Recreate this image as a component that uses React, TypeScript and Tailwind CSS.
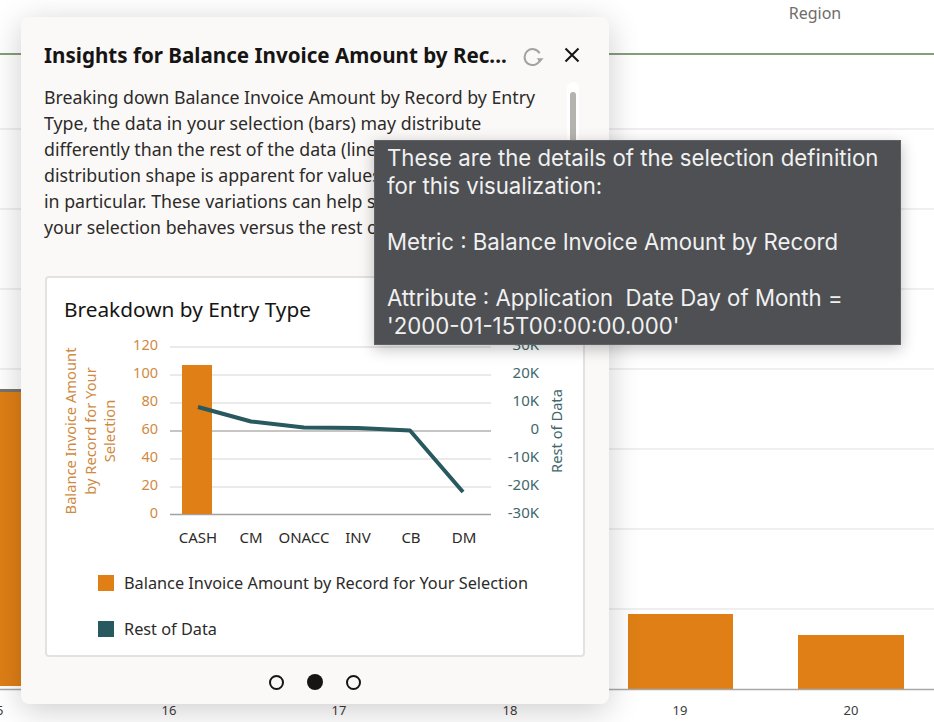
import * as React from "react";

const bodyLines = [
  "Breaking down Balance Invoice Amount by Record by Entry",
  "Type, the data in your selection (bars) may distribute",
  "differently than the rest of the data (line). A different",
  "distribution shape is apparent for values CASH and DM",
  "in particular. These variations can help show how",
  "your selection behaves versus the rest of the data.",
];

const leftTicks = [
  { label: "120", y: 345 },
  { label: "100", y: 373 },
  { label: "80", y: 401 },
  { label: "60", y: 429 },
  { label: "40", y: 457 },
  { label: "20", y: 485 },
  { label: "0", y: 513 },
];

const rightTicks = [
  { label: "30K", y: 345 },
  { label: "20K", y: 373 },
  { label: "10K", y: 401 },
  { label: "0", y: 429 },
  { label: "-10K", y: 457 },
  { label: "-20K", y: 485 },
  { label: "-30K", y: 513 },
];

const categories = [
  { label: "CASH", x: 197 },
  { label: "CM", x: 250 },
  { label: "ONACC", x: 303 },
  { label: "INV", x: 357 },
  { label: "CB", x: 410 },
  { label: "DM", x: 463 },
];

function BackgroundChart() {
  return (
    <svg width="934" height="722" className="block" style={{ fontFamily: "'Noto Sans', sans-serif" }}>
      <text x="815" y="19" textAnchor="middle" fontSize="16" fill="#6f6d6a">
        Region
      </text>
      <line x1="0" x2="934" y1="54" y2="54" stroke="#5f7d4f" strokeWidth="1.5" />
      {[129, 209, 289, 369, 449, 529, 609].map((y) => (
        <line key={y} x1="0" x2="934" y1={y} y2={y} stroke="#ebeaea" strokeWidth="1.5" />
      ))}
      <rect x="-10" y="392" width="40" height="294" fill="#df7f16" />
      <rect x="-10" y="389" width="40" height="3" fill="#77736e" />
      <rect x="628" y="614" width="105" height="75" fill="#df7f16" />
      <rect x="798" y="635" width="106" height="54" fill="#df7f16" />
      <line x1="0" x2="934" y1="689.5" y2="689.5" stroke="#a9a8a6" strokeWidth="1.5" />
      {[
        { t: "15", x: -4 },
        { t: "16", x: 169 },
        { t: "17", x: 339 },
        { t: "18", x: 510 },
        { t: "19", x: 680 },
        { t: "20", x: 851 },
      ].map((l) => (
        <text key={l.t} x={l.x} y="715" textAnchor="middle" fontSize="13" fill="#3d3b39">
          {l.t}
        </text>
      ))}
    </svg>
  );
}

function BreakdownChart() {
  return (
    <svg
      width="538"
      height="246"
      viewBox="46 330 538 246"
      className="block"
      style={{ fontFamily: "'Noto Sans', sans-serif" }}
    >
      {[347, 375, 403, 459, 487].map((y) => (
        <line key={y} x1="169" x2="490" y1={y} y2={y} stroke="#e4e3e1" strokeWidth="1.5" />
      ))}
      <line x1="169" x2="490" y1="431" y2="431" stroke="#b3b2b0" strokeWidth="1.5" />
      <line x1="169" x2="490" y1="514.5" y2="514.5" stroke="#a3a2a0" strokeWidth="1.5" />
      <rect x="181" y="365" width="30" height="149" fill="#df7f16" />
      <polyline
        points="197,407 250,421.5 303,427.5 357,428 409,430.5 462,492"
        fill="none"
        stroke="#27595e"
        strokeWidth="4"
        strokeLinejoin="round"
      />
      {leftTicks.map((t) => (
        <text key={t.label} x="157" y={t.y + 5} textAnchor="end" fontSize="14.5" fill="#cf8a3f">
          {t.label}
        </text>
      ))}
      {rightTicks.map((t) => (
        <text key={t.label} x="538" y={t.y + 5} textAnchor="end" fontSize="15" fill="#41686c">
          {t.label}
        </text>
      ))}
      {categories.map((c) => (
        <text key={c.label} x={c.x} y="543" textAnchor="middle" fontSize="15" fill="#2b2a28">
          {c.label}
        </text>
      ))}
      <g fontSize="14.7" fill="#cf8a3f" textAnchor="middle">
        <text transform="translate(75 431) rotate(-90)">Balance Invoice Amount</text>
        <text transform="translate(95 431) rotate(-90)">by Record for Your</text>
        <text transform="translate(114 431) rotate(-90)">Selection</text>
      </g>
      <text fontSize="14.7" fill="#41686c" textAnchor="middle" transform="translate(561 431) rotate(-90)">
        Rest of Data
      </text>
    </svg>
  );
}

function RefreshIcon() {
  return (
    <svg width="22" height="22" viewBox="0 0 22 22" fill="none" stroke="#a3a2a0" strokeWidth="2">
      <path d="M17.6 8.2A8 8 0 1 0 18.2 14.5" />
      <path d="M14.6 13.2h7l-3.5 4z" fill="#a3a2a0" stroke="none" />
    </svg>
  );
}

function CloseIcon() {
  return (
    <svg width="16" height="16" viewBox="0 0 16 16" fill="none" stroke="#161513" strokeWidth="2">
      <path d="M1.5 1.5l13 13M14.5 1.5l-13 13" />
    </svg>
  );
}

export default function App() {
  return (
    <div className="relative w-[934px] h-[722px] overflow-hidden bg-white">
      <BackgroundChart />

      {/* insights popup */}
      <div className="absolute left-[21px] top-[17px] w-[588px] h-[687px] flex flex-col rounded-lg bg-[#fbf9f8] shadow-[0_6px_32px_rgba(0,0,0,0.2)] font-['Noto_Sans',sans-serif]">
        <div className="flex items-center h-[28px] mt-[24px] pl-[23px] text-[#161513]">
          <div className="w-[470px] whitespace-nowrap text-[20.6px] leading-[28px] font-bold">
            Insights for Balance Invoice Amount by Rec...
          </div>
          <div className="ml-[8px] mt-[1px]">
            <RefreshIcon />
          </div>
          <div className="ml-[20px] mt-[-1px]">
            <CloseIcon />
          </div>
        </div>

        <div className="relative mt-[15px] pl-[23px] text-[17.75px] leading-[26px] text-[#2c2b29]">
          {bodyLines.map((line) => (
            <div key={line} className="whitespace-nowrap">
              {line}
            </div>
          ))}
          <div className="absolute left-[546px] top-[-2px] w-[12px] h-[170px] rounded-full bg-white">
            <div className="mx-auto mt-[10px] w-[6px] h-[150px] rounded-full bg-[#b5b3b0]" />
          </div>
        </div>

        <div className="mt-[36px] mx-[24px] h-[381px] flex flex-col rounded-[4px] border-2 border-[#e3e2e0] bg-white">
          <div className="pl-[17px] pt-[16px] h-[52px] text-[20.8px] leading-[30px] text-[#161513]">
            Breakdown by Entry Type
          </div>
          <BreakdownChart />
          <div className="flex items-center h-[16px] mt-[-1px] pl-[51px] text-[16.3px] text-[#2c2b29]">
            <div className="w-[16px] h-[16px] bg-[#df7f16]" />
            <div className="ml-[10px] whitespace-nowrap">Balance Invoice Amount by Record for Your Selection</div>
          </div>
          <div className="flex items-center h-[16px] mt-[30px] pl-[51px] text-[16.3px] text-[#2c2b29]">
            <div className="w-[16px] h-[16px] bg-[#27595e]" />
            <div className="ml-[10px] whitespace-nowrap">Rest of Data</div>
          </div>
        </div>

        <div className="flex items-center justify-center gap-[23px] mt-[17px] pr-[1px]">
          <div className="w-[15px] h-[15px] rounded-full border-2 border-[#161513]" />
          <div className="w-[16px] h-[16px] rounded-full bg-[#161513]" />
          <div className="w-[15px] h-[15px] rounded-full border-2 border-[#161513]" />
        </div>
      </div>

      {/* selection tooltip */}
      <div className="absolute left-[374px] top-[140px] w-[527px] h-[205px] border border-[#5f6165] bg-[#4e5054] pl-[12px] pt-[3px] text-[22.2px] leading-[28px] text-[#f1f1f1] font-['Inter',sans-serif] shadow-[0_4px_14px_rgba(0,0,0,0.25)]">
        <div>These are the details of the selection definition</div>
        <div>for this visualization:</div>
        <div className="mt-[28px]">Metric : Balance Invoice Amount by Record</div>
        <div className="mt-[28px]">Attribute : Application&nbsp; Date Day of Month =</div>
        <div>'2000-01-15T00:00:00.000'</div>
      </div>
    </div>
  );
}
